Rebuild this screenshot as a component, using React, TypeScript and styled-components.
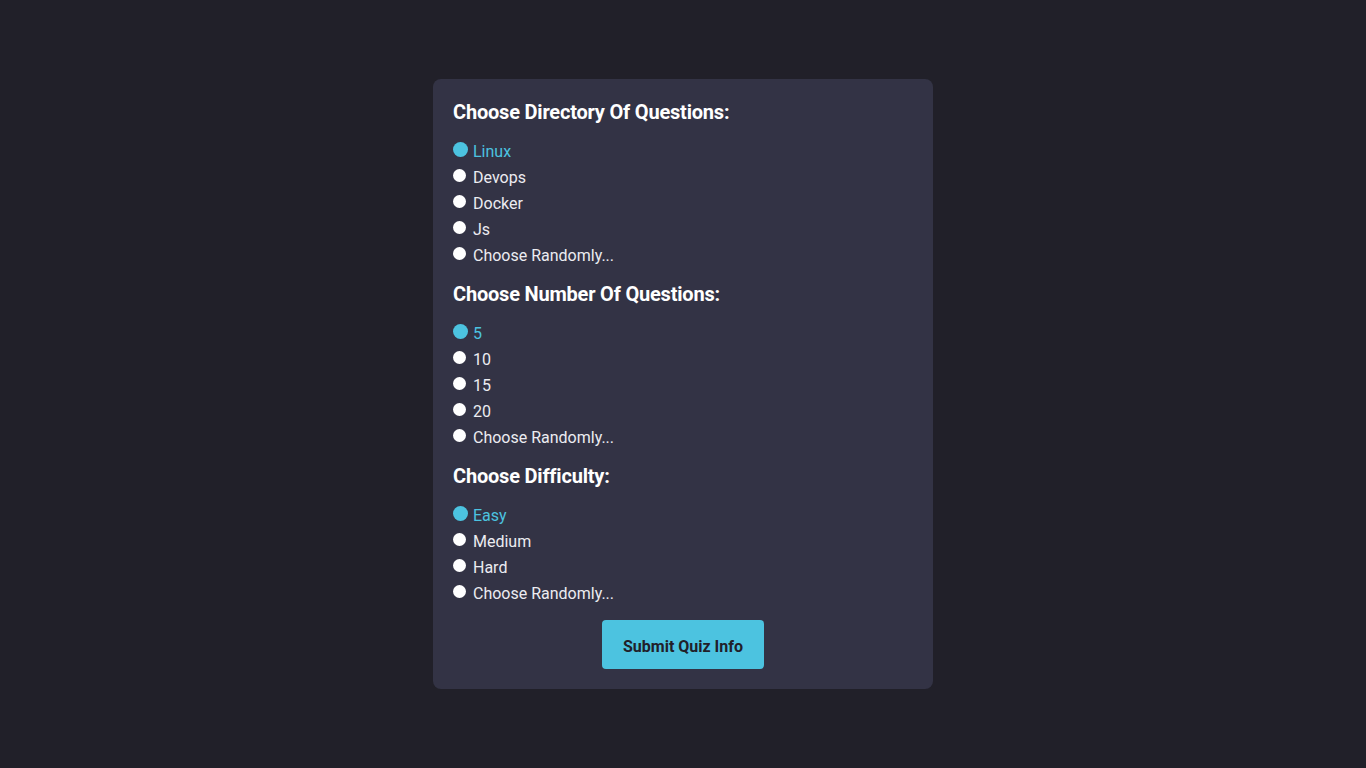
import React, { useState } from "react";
import styled, { createGlobalStyle } from "styled-components";

const Global = createGlobalStyle`
  html, body { margin: 0; padding: 0; background: #212029; }
  body { font-family: Roboto, "Liberation Sans", sans-serif; }
  * { box-sizing: border-box; }
`;

const Page = styled.div`
  min-height: 768px;
  display: flex;
  justify-content: center;
  align-items: flex-start;
  padding-top: 79px;
`;

const Card = styled.form`
  width: 500px;
  background: #333345;
  border-radius: 8px;
  padding: 21px 20px 20px;
  display: flex;
  flex-direction: column;
`;

const Heading = styled.h2`
  margin: 0 0 14px;
  font-size: 20px;
  line-height: 24px;
  font-weight: 700;
  color: #ffffff;
  letter-spacing: -0.2px;
`;

const Group = styled.div`
  display: flex;
  flex-direction: column;
  margin-bottom: 14px;
`;

const Option = styled.label<{ $checked: boolean }>`
  display: flex;
  align-items: center;
  height: 26px;
  font-size: 16px;
  color: ${(p) => (p.$checked ? "#4cc3e0" : "#ececf1")};
  cursor: pointer;
`;

const Radio = styled.input`
  appearance: none;
  margin: 0 7px 0 0;
  width: 13px;
  height: 13px;
  border-radius: 50%;
  background: #ffffff;
  flex: none;
  position: relative;
  top: -2px;
  &:checked {
    width: 15px;
    height: 15px;
    margin-right: 5px;
    background: #4cc3e0;
    top: -2px;
  }
`;

const ButtonRow = styled.div`
  display: flex;
  justify-content: center;
`;

const Submit = styled.button`
  width: 162px;
  height: 49px;
  padding: 4px 0 0;
  border: none;
  border-radius: 4px;
  background: #4cc3e0;
  color: #212029;
  font-family: Roboto, "Liberation Sans", sans-serif;
  font-size: 16px;
  font-weight: 700;
  cursor: pointer;
`;

const groups = [
  { name: "dir", title: "Choose Directory Of Questions:", options: ["Linux", "Devops", "Docker", "Js", "Choose Randomly..."] },
  { name: "num", title: "Choose Number Of Questions:", options: ["5", "10", "15", "20", "Choose Randomly..."] },
  { name: "diff", title: "Choose Difficulty:", options: ["Easy", "Medium", "Hard", "Choose Randomly..."] },
];

export default function App() {
  const [sel, setSel] = useState<Record<string, number>>({ dir: 0, num: 0, diff: 0 });
  return (
    <>
      <Global />
      <Page>
        <Card onSubmit={(e) => e.preventDefault()}>
          {groups.map((g) => (
            <React.Fragment key={g.name}>
              <Heading>{g.title}</Heading>
              <Group>
                {g.options.map((o, i) => (
                  <Option key={o} $checked={sel[g.name] === i}>
                    <Radio
                      type="radio"
                      name={g.name}
                      checked={sel[g.name] === i}
                      onChange={() => setSel({ ...sel, [g.name]: i })}
                    />
                    {o}
                  </Option>
                ))}
              </Group>
            </React.Fragment>
          ))}
          <ButtonRow>
            <Submit type="submit">Submit Quiz Info</Submit>
          </ButtonRow>
        </Card>
      </Page>
    </>
  );
}
